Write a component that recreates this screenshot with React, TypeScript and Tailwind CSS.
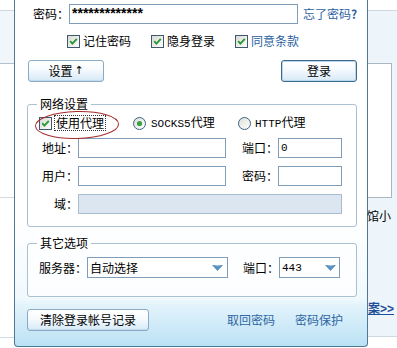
import React from "react";

const CJK = "[font-family:'Noto_Sans_CJK_SC','Noto_Sans',sans-serif]";
const MONO = "[font-family:'Liberation_Mono',monospace]";

function Check() {
  return (
    <svg width="13" height="13" viewBox="0 0 13 13" className="shrink-0 block">
      <defs>
        <linearGradient id="cbg" x1="0" y1="0" x2="1" y2="1">
          <stop offset="0" stopColor="#d8d9d2" />
          <stop offset="1" stopColor="#ffffff" />
        </linearGradient>
      </defs>
      <rect x="0.5" y="0.5" width="12" height="12" fill="url(#cbg)" stroke="#3f5a6e" />
      <path d="M3.2 6.2 L5.4 8.6 L9.8 3.8" stroke="#2a9a36" strokeWidth="1.9" fill="none" />
    </svg>
  );
}

function Radio({ on }: { on?: boolean }) {
  return (
    <svg width="13" height="13" viewBox="0 0 13 13" className="shrink-0 block">
      <defs>
        <linearGradient id="rbg" x1="0" y1="0" x2="1" y2="1">
          <stop offset="0" stopColor="#dcdcd6" />
          <stop offset="1" stopColor="#ffffff" />
        </linearGradient>
      </defs>
      <circle cx="6.5" cy="6.5" r="6" fill="url(#rbg)" stroke="#3d6482" />
      {on && <circle cx="6.5" cy="6.5" r="2.6" fill="#3aa23f" />}
    </svg>
  );
}

function Arrow() {
  return (
    <svg width="11" height="6" viewBox="0 0 11 6" className="block shrink-0">
      <polygon points="0,0 11,0 5.5,6" fill="#5a8fc2" />
      <polygon points="1.5,0 9.5,0 5.5,1.6" fill="#9cc0e0" />
    </svg>
  );
}

function Box({ w, children, cls = "" }: { w: string; children?: React.ReactNode; cls?: string }) {
  return (
    <div className={`${w} h-[20px] border border-[#7f9db9] bg-white flex items-center pl-[2px] ${cls}`}>
      {children}
    </div>
  );
}

function Btn({ w, children, focus }: { w: string; children: React.ReactNode; focus?: boolean }) {
  return (
    <div
      className={`${w} h-[22px] rounded-[3px] border flex items-center justify-center leading-[14px] bg-[linear-gradient(to_bottom,#ffffff_0%,#f7fbfe_40%,#d6e9f7_100%)] ${
        focus
          ? "border-[#3c6a8b] shadow-[inset_0_0_0_1px_#b9d6ec]"
          : "border-[#8eaac0] shadow-[inset_0_-1px_0_#c3dbee]"
      }`}
    >
      {children}
    </div>
  );
}

export default function App() {
  return (
    <div className={`flex w-[397px] h-[348px] overflow-hidden bg-white text-[12px] text-black ${CJK}`}>
      {/* page left strip */}
      <div className="w-[14px] shrink-0 flex flex-col">
        <div className="h-[11px] border-b border-[#cdd7df]" />
        <div className="h-[53px] bg-[#f1f6fa] border-b border-[#b3c2ce]" />
        <div className="h-[134px] border-b border-[#d3dbe2]" />
        <div className="h-[140px] border-b border-[#d3dbe2]" />
        <div className="flex-1" />
      </div>

      {/* dialog */}
      <div className="w-[354px] h-[347px] shrink-0 border-x border-b border-[#4f7894] rounded-b-[4px] flex flex-col bg-[linear-gradient(to_bottom,#ffffff_0px,#ffffff_220px,#f1f9fd_298px,#e2f3fb_306px,#bae1f5_347px)]">
        {/* row 1 */}
        <div className="mt-[4px] h-[20px] flex items-center pl-[18px]">
          <div className="w-[36px] leading-[14px]">密码：</div>
          <Box w="w-[229px]">
            <span className="[font-family:'Liberation_Sans',sans-serif] text-[14px] font-bold leading-[14px] tracking-[0px] -mt-[2px]">
              *************
            </span>
          </Box>
          <div className="ml-[5px] leading-[14px] text-[#2f62a0]">
            忘了密码<span className="font-bold">?</span>
          </div>
        </div>

        {/* row 2 */}
        <div className="mt-[10px] h-[14px] flex items-center pl-[52px] leading-[14px]">
          <Check />
          <span className="ml-[3px]">记住密码</span>
          <span className="ml-[20px]"><Check /></span>
          <span className="ml-[3px]">隐身登录</span>
          <span className="ml-[20px]"><Check /></span>
          <span className="ml-[3px] text-[#2a5fa0]">同意条款</span>
        </div>

        {/* row 3 */}
        <div className="mt-[12px] h-[22px] flex justify-between pl-[13px] pr-[10px]">
          <Btn w="w-[76px]">
            <span>设置</span>
            <span className="ml-[2px] [font-family:'DejaVu_Sans',sans-serif] text-[11px]">↑</span>
          </Btn>
          <Btn w="w-[76px]" focus>
            <span>登录</span>
          </Btn>
        </div>

        {/* network settings */}
        <div className="relative mt-[22px] ml-[12px] w-[330px] border border-[#a9c1d3] rounded-[3px] flex flex-col pb-[12px] bg-white">
          <div className="-mt-[8px] ml-[9px] self-start px-[3px] bg-white leading-[14px]">网络设置</div>
          <svg width="88" height="32" viewBox="0 0 88 32" className="absolute left-[5px] top-[4px]">
            <ellipse cx="44" cy="16" rx="41.5" ry="13.5" fill="none" stroke="#a52a2a" strokeWidth="1" transform="rotate(-1.5 44 16)" />
          </svg>
          <div className="mt-[4px] h-[16px] flex items-center pl-[11px] leading-[14px]">
            <Check />
            <span className="ml-[2px] border border-dotted border-[#333] px-[1px] leading-[14px]">使用代理</span>
            <div className="ml-[27px] w-[105px] flex items-center">
              <Radio on />
              <span className="ml-[5px]"><span className={`${MONO} text-[11px]`}>SOCKS5</span>代理</span>
            </div>
            <div className="flex items-center">
              <Radio />
              <span className="ml-[4px]"><span className={`${MONO} text-[11px]`}>HTTP</span>代理</span>
            </div>
          </div>
          <div className="mt-[7px] h-[20px] flex items-center leading-[14px]">
            <div className="w-[50px] text-right">地址：</div>
            <Box w="w-[148px]" />
            <div className="ml-[16px] w-[36px]">端口：</div>
            <Box w="w-[64px]">
              <span className={`${MONO} text-[11px]`}>0</span>
            </Box>
          </div>
          <div className="mt-[8px] h-[20px] flex items-center leading-[14px]">
            <div className="w-[50px] text-right">用户：</div>
            <Box w="w-[148px]" />
            <div className="ml-[16px] w-[36px]">密码：</div>
            <Box w="w-[64px]" />
          </div>
          <div className="mt-[8px] h-[20px] flex items-center leading-[14px]">
            <div className="w-[50px] text-right">域：</div>
            <div className="w-[264px] h-[20px] border border-[#a9bdcd] bg-[#dbe6f0]" />
          </div>
        </div>

        {/* other options */}
        <div className="mt-[16px] ml-[12px] w-[330px] border border-[#a9c1d3] rounded-[3px] flex flex-col pb-[18px] bg-white/70">
          <div className="-mt-[8px] ml-[9px] self-start px-[3px] bg-white leading-[14px]">其它选项</div>
          <div className="mt-[7px] h-[21px] flex items-center pl-[11px] leading-[14px]">
            <div className="w-[48px]">服务器：</div>
            <div className="w-[141px] h-[21px] border border-[#7f9db9] bg-white flex items-center justify-between pl-[2px] pr-[4px]">
              <span>自动选择</span>
              <Arrow />
            </div>
            <div className="ml-[15px] w-[36px]">端口：</div>
            <div className="w-[61px] h-[21px] border border-[#7f9db9] bg-white flex items-center justify-between pl-[2px] pr-[3px]">
              <span className={`${MONO} text-[11px]`}>443</span>
              <Arrow />
            </div>
          </div>
        </div>

        {/* bottom row */}
        <div className="mt-[12px] h-[22px] flex items-center pl-[12px] leading-[14px]">
          <Btn w="w-[122px]">
            <span>清除登录帐号记录</span>
          </Btn>
          <span className="ml-[78px] text-[#2f66a3]">取回密码</span>
          <span className="ml-[20px] text-[#2f66a3]">密码保护</span>
        </div>
      </div>

      {/* page right strip */}
      <div className="flex-1 flex flex-col">
        <div className="h-[11px] border-b border-[#cdd7df]" />
        <div className="h-[326px] bg-[#eef5fa] border-b border-[#cfd9e0] flex flex-col">
          <div className="h-[52px]" />
          <div className="h-[135px] w-[24px] bg-white border-t border-r border-b border-[#a9b7c3]" />
          <div className="mt-[11px] -ml-[1px] leading-[14px] whitespace-nowrap">馆小</div>
          <div className="mt-[77px] leading-[15px] whitespace-nowrap font-bold underline text-[#1f4f99]">
            案<span className="[font-family:'Liberation_Sans',sans-serif]">&gt;&gt;</span>
          </div>
        </div>
        <div className="flex-1" />
      </div>
    </div>
  );
}
